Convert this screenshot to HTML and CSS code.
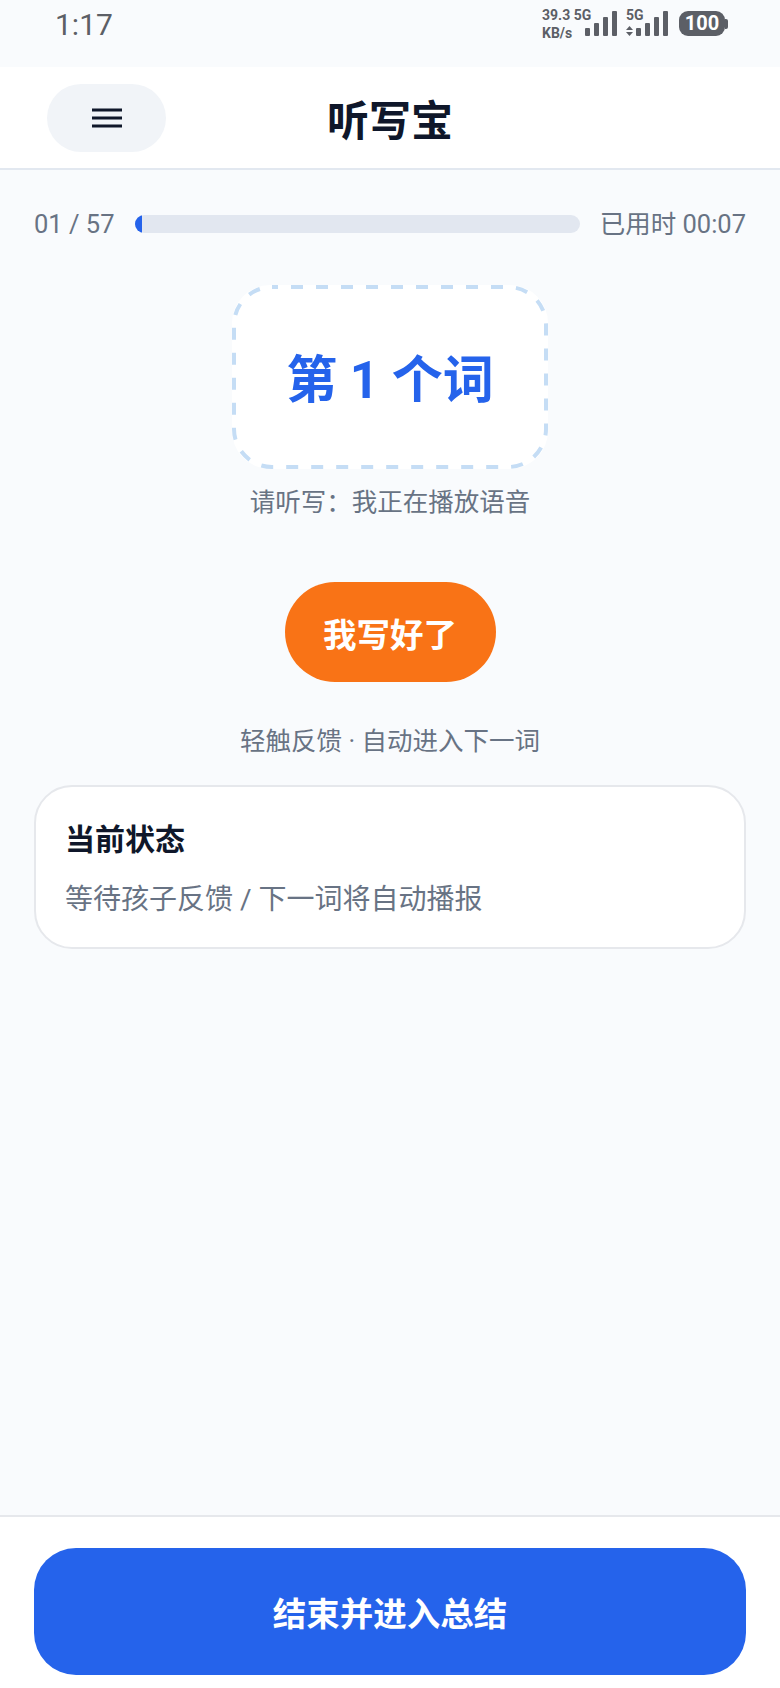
FILE: index.html
```html
<!DOCTYPE html>
<html lang="zh-CN">
<head>
    <meta charset="utf-8">
    <title>听写宝</title>
    <link rel="stylesheet" href="styles.css">
</head>
<body>
    <div id="statusbar">
        <span class="clock">1:17</span>
        <div class="status-right">
            <div class="net-speed">
                <span>39.3 5G</span>
                <span>KB/s</span>
            </div>
            <svg class="signal" width="32" height="25" viewBox="0 0 32 25">
                <rect x="0" y="17" width="5" height="8" rx="1"/>
                <rect x="9" y="12" width="5" height="13" rx="1"/>
                <rect x="18" y="6" width="5" height="19" rx="1"/>
                <rect x="27" y="0" width="5" height="25" rx="1"/>
            </svg>
            <div class="sim2">
                <span>5G</span>
                <svg width="7" height="10" viewBox="0 0 7 10">
                    <path d="M3.5 0 L7 4 H0 Z M0 6 H7 L3.5 10 Z"/>
                </svg>
            </div>
            <svg class="signal sim2-bars" width="32" height="25" viewBox="0 0 32 25">
                <rect x="0" y="17" width="5" height="8" rx="1"/>
                <rect x="9" y="12" width="5" height="13" rx="1"/>
                <rect x="18" y="6" width="5" height="19" rx="1"/>
                <rect x="27" y="0" width="5" height="25" rx="1"/>
            </svg>
            <div class="battery">
                <span class="battery-level">100</span>
                <span class="battery-tip"></span>
            </div>
        </div>
    </div>

    <header id="topbar">
        <button class="menu-btn" aria-label="菜单">
            <svg width="30" height="20" viewBox="0 0 30 20">
                <path d="M0 2 H30 M0 10 H30 M0 18 H30" stroke="#0f172a" stroke-width="3" fill="none"/>
            </svg>
        </button>
        <h1>听写宝</h1>
    </header>

    <main id="content">
        <div class="progress-row">
            <span>01 / 57</span>
            <div class="track"><div class="fill" style="width: 1.75%"></div></div>
            <span>已用时 00:07</span>
        </div>

        <div class="word-box">
            <svg class="word-border" width="316" height="184" viewBox="0 0 316 184">
                <rect x="2" y="2" width="312" height="180" rx="38"/>
            </svg>
            第 1 个词
        </div>
        <p class="listen-tip">请听写：我正在播放语音</p>

        <button class="done-btn">我写好了</button>
        <p class="hint">轻触反馈 · 自动进入下一词</p>

        <section class="state-card">
            <h2>当前状态</h2>
            <p>等待孩子反馈 / 下一词将自动播报</p>
        </section>
    </main>

    <footer id="bottom">
        <button class="finish-btn">结束并进入总结</button>
    </footer>
</body>
</html>
```

FILE: styles.css
```css
* {
    box-sizing: border-box;
}

html, body {
    margin: 0;
    height: 1688px;
    overflow: hidden;
}

body {
    display: flex;
    flex-direction: column;
    font-family: Roboto, "Noto Sans CJK SC", sans-serif;
    background-color: #f9fbfd;
    color: #687384;
}

button {
    font-family: inherit;
    border: none;
    padding: 0;
}

#statusbar {
    height: 67px;
    display: flex;
    align-items: flex-start;
    justify-content: space-between;
    padding: 6px 52px 0 55px;
    color: #5c5f66;
}

.clock {
    margin-top: 1px;
    font-size: 30px;
    line-height: 36px;
}

.status-right {
    display: flex;
    align-items: flex-start;
    font-weight: 700;
    font-size: 14px;
    line-height: 18px;
}

.net-speed {
    display: flex;
    flex-direction: column;
    width: 43px;
    white-space: nowrap;
}

.signal {
    fill: #5c5f66;
    margin-top: 5px;
    margin-right: 9px;
}

.sim2 {
    display: flex;
    flex-direction: column;
    width: 10px;
    white-space: nowrap;
}

.sim2 svg {
    fill: #5c5f66;
    margin-top: 2px;
}

.sim2-bars {
    margin-right: 11px;
}

.battery {
    display: flex;
    align-items: center;
    margin-top: 5px;
}

.battery-level {
    width: 46px;
    height: 25px;
    border-radius: 9px;
    background-color: #5c5f66;
    color: #fff;
    font-size: 20px;
    line-height: 25px;
    text-align: center;
}

.battery-tip {
    width: 3px;
    height: 10px;
    border-radius: 0 2px 2px 0;
    background-color: #5c5f66;
}

#topbar {
    height: 103px;
    display: grid;
    grid-template-columns: 119px 1fr 119px;
    align-items: center;
    padding: 0 47px;
    background-color: #fff;
    border-bottom: 2px solid #e2e8f0;
}

.menu-btn {
    width: 119px;
    height: 68px;
    border-radius: 34px;
    background-color: #f1f4f8;
    display: flex;
    align-items: center;
    justify-content: center;
}

#topbar h1 {
    margin: 8px 0 0;
    text-align: center;
    font-size: 42px;
    line-height: 50px;
    font-weight: 700;
    color: #0f172a;
}

#content {
    flex: 1;
    display: flex;
    flex-direction: column;
    align-items: center;
    padding: 0 34px;
}

.progress-row {
    width: 100%;
    height: 44px;
    margin-top: 32px;
    display: flex;
    align-items: center;
    gap: 20px;
    font-size: 25.5px;
    line-height: 44px;
    white-space: nowrap;
}

.track {
    flex: 1;
    height: 18px;
    border-radius: 9px;
    background-color: #e2e7f0;
    overflow: hidden;
}

.fill {
    height: 100%;
    background-color: #2563eb;
}

.word-box {
    position: relative;
    width: 316px;
    height: 184px;
    margin-top: 39px;
    padding-bottom: 2px;
    display: flex;
    align-items: center;
    justify-content: center;
    background-color: #fff;
    border-radius: 38px;
    font-size: 51px;
    font-weight: 700;
    color: #2563eb;
}

.word-border {
    position: absolute;
    top: 0;
    left: 0;
}

.word-border rect {
    fill: none;
    stroke: #c5ddf5;
    stroke-width: 4;
    stroke-dasharray: 12 13;
    stroke-dashoffset: 6;
}

.listen-tip {
    margin: 15px 0 0;
    font-size: 25.5px;
    line-height: 36px;
}

.done-btn {
    width: 211px;
    height: 100px;
    margin-top: 62px;
    border-radius: 50px;
    background-color: #f97316;
    color: #fff;
    font-size: 33.5px;
    font-weight: 700;
}

.hint {
    margin: 41px 0 0;
    font-size: 25.5px;
    line-height: 36px;
}

.state-card {
    width: 100%;
    height: 164px;
    margin-top: 26px;
    padding: 33px 29px 0;
    background-color: #fff;
    border: 2px solid #e6e8ec;
    border-radius: 38px;
}

.state-card h2 {
    margin: 0;
    font-size: 30px;
    line-height: 40px;
    font-weight: 700;
    color: #0f172a;
}

.state-card p {
    margin: 20px 0 0;
    font-size: 28px;
    line-height: 40px;
}

#bottom {
    height: 173px;
    padding: 31px 34px 0;
    background-color: #fff;
    border-top: 2px solid #e6e8ec;
}

.finish-btn {
    width: 100%;
    height: 127px;
    border-radius: 42px;
    background-color: #2563eb;
    color: #fff;
    font-size: 33.5px;
    font-weight: 700;
}
```
